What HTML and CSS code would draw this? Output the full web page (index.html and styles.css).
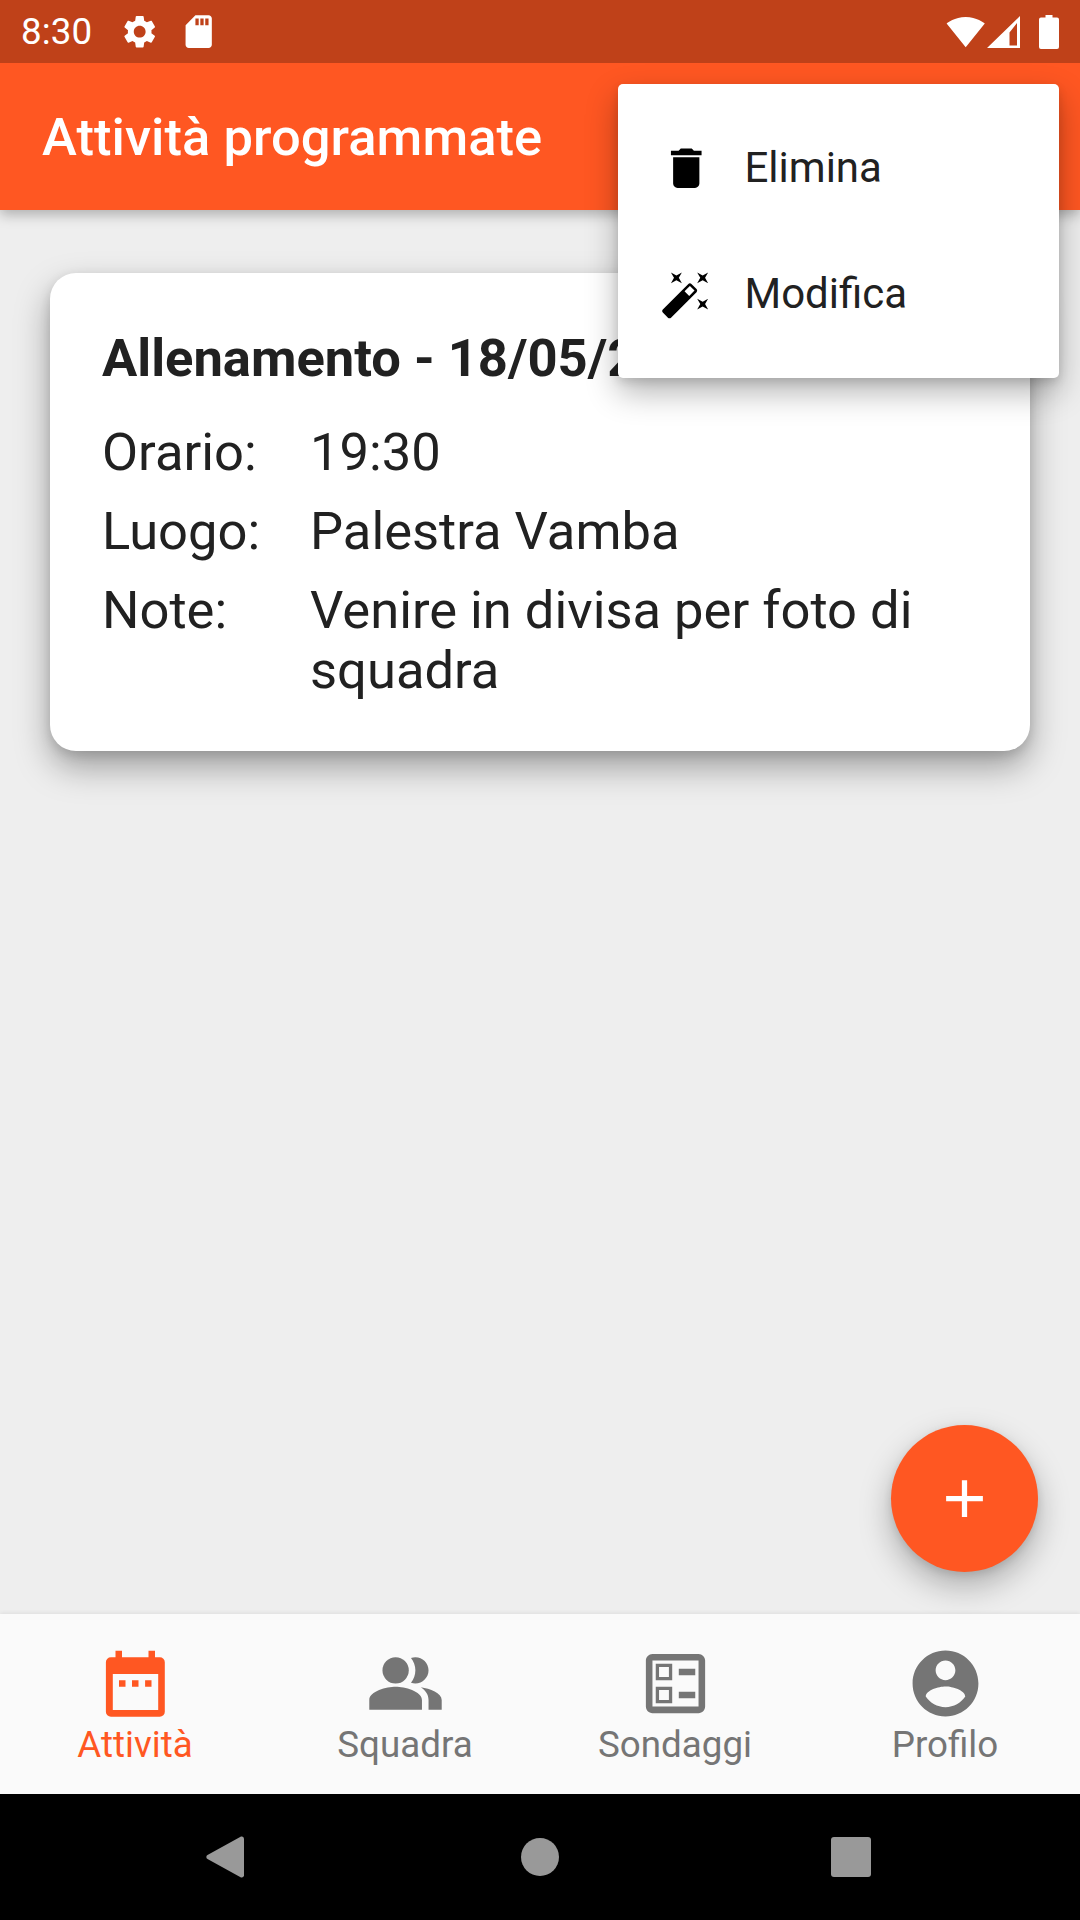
FILE: index.html
```html
<!DOCTYPE html>
<html lang="it">
<head>
<meta charset="utf-8">
<title>Attività programmate</title>
<link rel="stylesheet" href="styles.css">
</head>
<body>
<div class="screen">
  <div class="status">
    <span class="time">8:30</span>
    <svg class="st-icon gear" viewBox="0 0 24 24"><path d="M19.14 12.94c.04-.3.06-.61.06-.94 0-.32-.02-.64-.07-.94l2.03-1.58c.18-.14.23-.41.12-.61l-1.92-3.32c-.12-.22-.37-.29-.59-.22l-2.39.96c-.5-.38-1.03-.7-1.62-.94l-.36-2.54c-.04-.24-.24-.41-.48-.41h-3.84c-.24 0-.43.17-.47.41l-.36 2.54c-.59.24-1.13.57-1.62.94l-2.39-.96c-.22-.08-.47 0-.59.22L2.74 8.87c-.12.21-.08.47.12.61l2.03 1.58c-.05.3-.09.63-.09.94s.02.64.07.94l-2.03 1.58c-.18.14-.23.41-.12.61l1.92 3.32c.12.22.37.29.59.22l2.39-.96c.5.38 1.03.7 1.62.94l.36 2.54c.05.24.24.41.48.41h3.84c.24 0 .44-.17.47-.41l.36-2.54c.59-.24 1.13-.56 1.62-.94l2.39.96c.22.08.47 0 .59-.22l1.92-3.32c.12-.22.07-.47-.12-.61l-2.01-1.58zM12 15.6c-1.98 0-3.6-1.62-3.6-3.6s1.62-3.6 3.6-3.6 3.6 1.62 3.6 3.6-1.62 3.6-3.6 3.6z"/></svg>
    <svg class="st-icon sd" viewBox="0 0 24 24"><path d="M18 2h-8L4.02 8 4 20c0 1.1.9 2 2 2h12c1.1 0 2-.9 2-2V4c0-1.1-.9-2-2-2zm-6 6h-2V4h2v4zm3 0h-2V4h2v4zm3 0h-2V4h2v4z"/></svg>
    <span class="spacer"></span>
    <svg class="st-icon wifi" viewBox="0 0 24 24"><path d="M12.01 21.49L23.64 7c-.45-.34-4.93-4-11.64-4C5.28 3 .81 6.66.37 7l11.63 14.49.01.01.01-.01z"/></svg>
    <svg class="signal" viewBox="0 0 33 32"><path fill-rule="evenodd" d="M0 32L33 0V32ZM22.500 29.500H30V7L22.500 16.500Z"/></svg>
    <svg class="battery" viewBox="0 0 20 34"><path d="M6.500 0h7v2.500H18a2 2 0 0 1 2 2V32a2 2 0 0 1-2 2H2a2 2 0 0 1-2-2V4.500a2 2 0 0 1 2-2h4.500z"/></svg>
  </div>

  <header class="appbar">
    <h1 class="appbar-title">Attività programmate</h1>
  </header>

  <main class="content">
    <article class="card">
      <h2 class="card-title">Allenamento - 18/05/2021</h2>
      <dl class="details">
        <dt>Orario:</dt><dd>19:30</dd>
        <dt>Luogo:</dt><dd>Palestra Vamba</dd>
        <dt>Note:</dt><dd>Venire in divisa per foto di squadra</dd>
      </dl>
    </article>
    <button class="fab" aria-label="Aggiungi">
      <svg class="fab-icon" viewBox="0 0 24 24"><path d="M19 13h-6v6h-2v-6H5v-2h6V5h2v6h6v2z"/></svg>
    </button>
  </main>

  <nav class="tabs">
    <div class="tab active">
      <svg class="tab-icon" viewBox="0 0 79 79"><path fill-rule="evenodd" d="M19.500 6.700h6.500v6.600h26.500V6.700H59v6.600h4.800a5 5 0 0 1 5 5V67.700a5 5 0 0 1-5 5H14.900a5 5 0 0 1-5-5V18.300a5 5 0 0 1 5-5h4.600zM16.800 30V66H62.200V30zM23 36.300h6.500v6.400H23zM36 36.300h6.500v6.400H36zM49.100 36.300h6.400v6.400h-6.400z"/></svg>
      <span class="tab-label">Attività</span>
    </div>
    <div class="tab">
      <svg class="tab-icon" viewBox="0 0 24 24"><path d="M16.67 13.13C18.04 14.06 19 15.320 19 17v3h4v-3c0-2.180-3.570-3.470-6.330-3.870z"/><circle cx="9" cy="8" r="4"/><path d="M15 12c2.210 0 4-1.790 4-4s-1.790-4-4-4c-.47 0-.91.1-1.330.24C14.500 5.270 15 6.580 15 8s-.5 2.730-1.330 3.760c.42.14.86.24 1.330.24zM9 13c-2.670 0-8 1.340-8 4v3h16v-3c0-2.660-5.330-4-8-4z"/></svg>
      <span class="tab-label">Squadra</span>
    </div>
    <div class="tab">
      <svg class="tab-icon" viewBox="0 0 24 24"><path d="M13 7.500h5v2h-5zm0 7h5v2h-5zM19 3H5c-1.100 0-2 .9-2 2v14c0 1.100.9 2 2 2h14c1.100 0 2-.9 2-2V5c0-1.100-.9-2-2-2zm0 16H5V5h14v14zM11 6H6v5h5V6zm-1 4H7V7h3v3zm1 3H6v5h5v-5zm-1 4H7v-3h3v3z"/></svg>
      <span class="tab-label">Sondaggi</span>
    </div>
    <div class="tab">
      <svg class="tab-icon" viewBox="0 0 24 24"><path d="M12 2C6.480 2 2 6.480 2 12s4.480 10 10 10 10-4.480 10-10S17.520 2 12 2zm0 3c1.660 0 3 1.340 3 3s-1.340 3-3 3-3-1.340-3-3 1.340-3 3-3zm0 14.200c-2.500 0-4.710-1.280-6-3.220.03-1.990 4-3.080 6-3.080 1.990 0 5.970 1.090 6 3.080-1.290 1.940-3.500 3.220-6 3.220z"/></svg>
      <span class="tab-label">Profilo</span>
    </div>
  </nav>

  <div class="sysnav">
    <svg class="back" viewBox="0 0 38 42"><path d="M35 .5a2.500 2.500 0 0 1 3 2V39.500a2.500 2.500 0 0 1-3 2L1.500 23a2.300 2.300 0 0 1 0-4z"/></svg>
    <span class="home"></span>
    <span class="recent"></span>
  </div>

  <div class="menu">
    <div class="menu-item">
      <svg class="menu-icon" viewBox="0 0 24 24"><path d="M6 19c0 1.100.9 2 2 2h8c1.100 0 2-.9 2-2V7H6v12zM19 4h-3.500l-1-1h-5l-1 1H5v2h14V4z"/></svg>
      <span class="menu-label">Elimina</span>
    </div>
    <div class="menu-item">
      <svg class="menu-icon" viewBox="0 0 24 24"><path fill-rule="evenodd" d="M7.500 5.600L10 7 8.600 4.500 10 2 7.500 3.400 5 2l1.400 2.500L5 7zm12 9.800L17 14l1.400 2.500L17 19l2.500-1.400L22 19l-1.400-2.500L22 14zM22 2l-2.500 1.400L17 2l1.400 2.500L17 7l2.500-1.400L22 7l-1.400-2.500zm-7.630 5.290c-.39-.39-1.020-.39-1.410 0L1.290 18.960c-.39.39-.39 1.020 0 1.410l2.340 2.340c.39.39 1.020.39 1.410 0L16.700 11.050c.39-.39.39-1.020 0-1.410l-2.330-2.350zm-1.030 5.490l-2.120-2.120 2.440-2.440 2.120 2.120-2.440 2.440z"/></svg>
      <span class="menu-label">Modifica</span>
    </div>
  </div>
</div>
</body>
</html>
```
FILE: styles.css
```css
* { box-sizing: border-box; }
html, body { margin: 0; padding: 0; }
body { font-family: Roboto, "Liberation Sans", sans-serif; background: #eee; }

.screen {
  position: relative;
  width: 1080px;
  height: 1920px;
  overflow: hidden;
  display: flex;
  flex-direction: column;
  background: #eeeeee;
}

/* status bar */
.status {
  height: 63px;
  flex: none;
  display: flex;
  align-items: center;
  padding: 0 21px 0 21px;
  background: #bf4119;
  color: #fff;
  position: relative;
  z-index: 3;
}
.time { font-size: 36.75px; line-height: 63px; letter-spacing: .1px; }
.st-icon { width: 39.4px; height: 39.4px; fill: #fff; flex: none; }
.gear { margin-left: 28px; }
.sd { margin-left: 19px; }
.spacer { flex: 1; }
.signal { width: 33px; height: 32px; fill: #fff; flex: none; margin-left: 2px; }
.battery { width: 20px; height: 34px; fill: #fff; flex: none; margin-left: 19px; }

/* app bar */
.appbar {
  height: 147px;
  flex: none;
  display: flex;
  align-items: center;
  padding: 0 42px;
  background: #ff5722;
  box-shadow: 0 5px 12px rgba(0, 0, 0, .26);
  position: relative;
  z-index: 2;
}
.appbar-title { margin: 0; color: #fff; font-size: 52.5px; font-weight: 500; letter-spacing: .05px; }

/* content */
.content { flex: 1; position: relative; padding: 63px 50px 0; }
.card {
  background: #fff;
  border-radius: 26px;
  padding: 54px 52px 51px;
  box-shadow: 0 16px 34px rgba(0, 0, 0, .34), 0 4px 12px rgba(0, 0, 0, .12);
}
.card-title { margin: 0 0 33px; font-size: 52.5px; font-weight: 700; color: #212121; white-space: nowrap; }
.details {
  margin: 0;
  display: grid;
  grid-template-columns: 208px 1fr;
  row-gap: 19px;
  font-size: 52.5px;
  line-height: 60px;
  color: #212121;
}
.details dd { margin: 0; }

.fab {
  position: absolute;
  right: 42px;
  bottom: 42px;
  width: 147px;
  height: 147px;
  padding: 0;
  border: 0;
  border-radius: 50%;
  background: #ff5722;
  display: flex;
  align-items: center;
  justify-content: center;
  box-shadow: 0 14px 32px rgba(0, 0, 0, .28), 0 3px 8px rgba(0, 0, 0, .1);
}
.fab-icon { width: 63px; height: 63px; fill: #fff; }

/* bottom tabs */
.tabs {
  height: 180px;
  flex: none;
  display: grid;
  grid-template-columns: repeat(4, 1fr);
  background: #fafafa;
  box-shadow: 0 -1px 4px rgba(0, 0, 0, .07);
  position: relative;
}
.tab { display: flex; flex-direction: column; align-items: center; padding-top: 30px; color: #757575; fill: #757575; }
.tab.active { color: #ff5722; fill: #ff5722; }
.tab-icon { width: 79px; height: 79px; flex: none; }
.tab-label { font-size: 36.75px; line-height: 44px; }

/* android nav */
.sysnav {
  height: 126px;
  flex: none;
  background: #000;
  display: flex;
  align-items: center;
  justify-content: center;
  gap: 277px;
  padding-right: 3px;
}
.back { width: 38px; height: 42px; fill: #999; flex: none; }
.home { width: 38px; height: 38px; border-radius: 50%; background: #999; flex: none; }
.recent { width: 40px; height: 40px; border-radius: 3px; background: #999; flex: none; margin-left: -5px; }

/* popup menu */
.menu {
  position: absolute;
  left: 618px;
  top: 84px;
  width: 441px;
  padding: 21px 0;
  background: #fff;
  border-radius: 5px;
  box-shadow: 0 14px 32px rgba(0, 0, 0, .3), 0 4px 10px rgba(0, 0, 0, .12);
  z-index: 5;
}
.menu-item {
  height: 126px;
  display: flex;
  align-items: center;
  gap: 32px;
  padding-left: 42px;
  font-size: 42px;
  color: #212121;
}
.menu-icon { width: 52.5px; height: 52.5px; fill: #000; flex: none; }
.menu-label { margin-bottom: 2px; }
```
